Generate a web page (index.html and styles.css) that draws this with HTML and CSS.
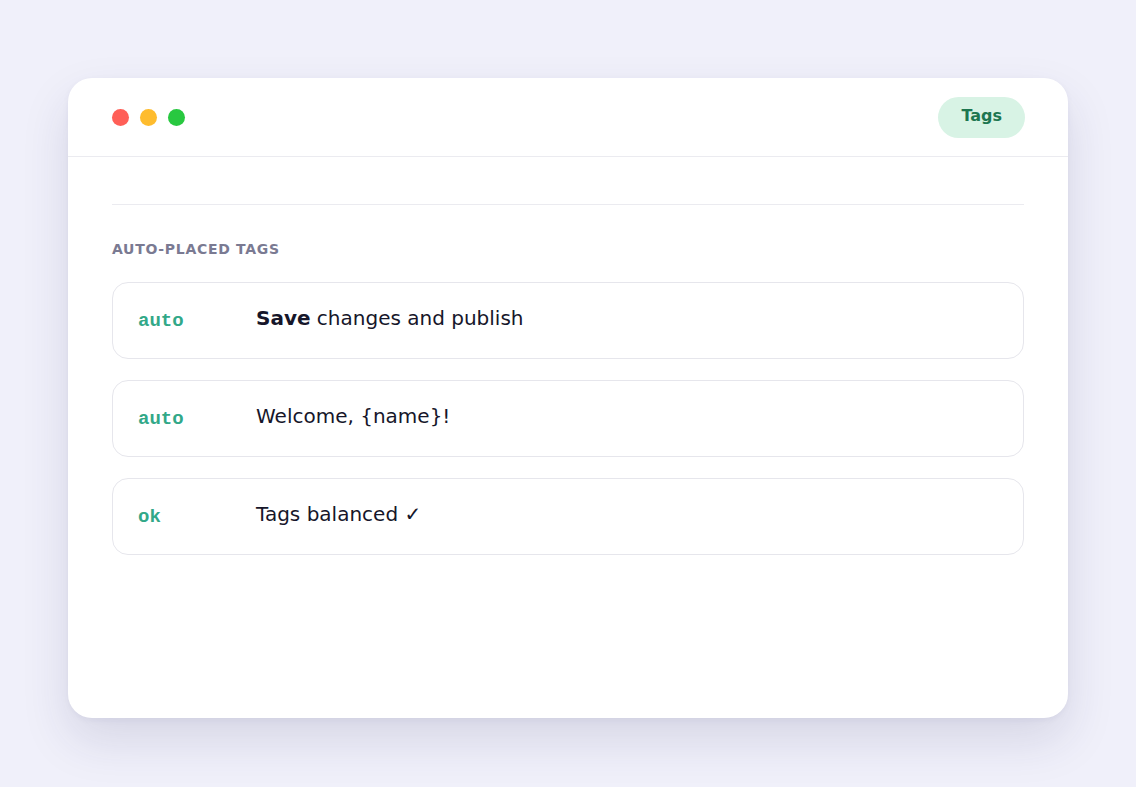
FILE: index.html
```html
<!DOCTYPE html>
<html lang="en">
<head>
<meta charset="utf-8">
<title>Tags</title>
<link rel="stylesheet" href="styles.css">
</head>
<body>
  <div class="window">
    <header class="titlebar">
      <div class="lights">
        <span class="light red"></span>
        <span class="light yellow"></span>
        <span class="light green"></span>
      </div>
      <span class="pill">Tags</span>
    </header>
    <main class="content">
      <div class="divider"></div>
      <h2 class="section-label">AUTO-PLACED TAGS</h2>
      <ul class="rows">
        <li class="row">
          <code class="tag">auto</code>
          <span class="text"><b>Save</b> changes and publish</span>
        </li>
        <li class="row">
          <code class="tag">auto</code>
          <span class="text">Welcome, {name}!</span>
        </li>
        <li class="row">
          <code class="tag">ok</code>
          <span class="text">Tags balanced ✓</span>
        </li>
      </ul>
    </main>
  </div>
</body>
</html>
```
FILE: styles.css
```css
* {
  box-sizing: border-box;
}

html,
body {
  margin: 0;
  padding: 0;
}

body {
  background: #f0f0fa;
  font-family: "DejaVu Sans", "Noto Sans", sans-serif;
  color: #16162a;
  padding: 78px 68px 0;
  min-height: 787px;
}

.window {
  width: 1000px;
  height: 640px;
  background: #ffffff;
  border-radius: 24px;
  box-shadow: 0 22px 48px rgba(40, 40, 90, 0.13), 0 2px 6px rgba(40, 40, 90, 0.05);
  overflow: hidden;
}

.titlebar {
  height: 79px;
  border-bottom: 1px solid #ebebf0;
  padding: 0 43px 0 44px;
  display: flex;
  align-items: center;
  justify-content: space-between;
}

.lights {
  display: flex;
  gap: 11px;
}

.light {
  width: 17px;
  height: 17px;
  border-radius: 50%;
}

.red { background: #ff5f57; }
.yellow { background: #febc2e; }
.green { background: #28c840; }

.pill {
  background: #d8f3e5;
  color: #1d7650;
  font-weight: 700;
  font-size: 16px;
  line-height: 19px;
  padding: 9px 23px 13px;
  border-radius: 999px;
}

.content {
  padding: 47px 44px 0;
}

.divider {
  border-top: 1px solid #ebebf0;
}

.section-label {
  margin: 36px 0 25px;
  font-size: 14px;
  line-height: 16px;
  font-weight: 700;
  letter-spacing: 0.7px;
  color: #7a7a92;
}

.rows {
  list-style: none;
  margin: 0;
  padding: 0;
  display: flex;
  flex-direction: column;
  gap: 21px;
}

.row {
  display: grid;
  grid-template-columns: 118px 1fr;
  align-items: baseline;
  height: 77px;
  padding: 23px 25px 27px;
  border: 1px solid #e6e6ec;
  border-radius: 16px;
  line-height: 24px;
}

.tag {
  font-family: "Liberation Mono", "DejaVu Sans Mono", monospace;
  font-size: 19px;
  font-weight: 700;
  color: #32a888;
  position: relative;
  top: 1px;
}

.text {
  font-size: 20px;
  color: #16162a;
}

.text b {
  font-weight: 700;
}
```
